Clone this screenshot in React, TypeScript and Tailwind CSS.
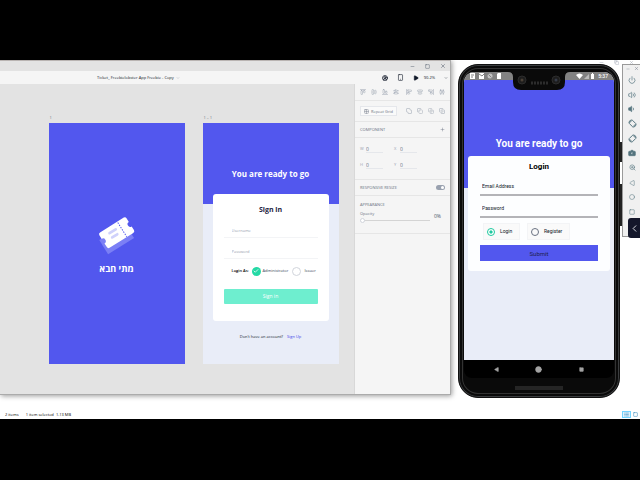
import type { ReactNode } from "react"
import {
  AlignCenterHorizontal, AlignCenterVertical, AlignEndHorizontal, AlignEndVertical,
  AlignHorizontalDistributeCenter, AlignStartHorizontal, AlignStartVertical,
  AlignVerticalDistributeCenter, Camera, Check, ChevronDown, ChevronLeft, Circle, CircleUserRound,
  Copy, Grid2x2, List, Minus, Play, Plus, Power, Smartphone, Square, SquaresExclude,
  SquaresIntersect, SquaresSubtract, SquaresUnite, Triangle, Volume1, Volume2, X, ZoomIn,
} from "lucide-react"

const alignGroups = [
  [AlignStartHorizontal, AlignCenterHorizontal, AlignEndHorizontal, AlignVerticalDistributeCenter],
  [AlignStartVertical, AlignCenterVertical, AlignEndVertical, AlignHorizontalDistributeCenter],
]

const pathIcons = [SquaresUnite, SquaresSubtract, SquaresIntersect, SquaresExclude]

const RotateDevice = ({ flip }: { flip?: boolean }) => (
  <svg viewBox="0 0 24 24" className={`size-[9px] ${flip ? "-scale-x-100" : ""}`} fill="none" stroke="currentColor" strokeWidth="2.5">
    <rect x="5" y="6" width="14" height="12" rx="1" transform="rotate(45 12 12)" />
    <path d="M2 10a10 10 0 0 1 8-8M22 14a10 10 0 0 1-8 8" />
  </svg>
)

const emulatorTools = [
  { name: "Power", icon: <Power className="size-2" /> },
  { name: "Volume up", icon: <Volume2 className="size-2" /> },
  { name: "Volume down", icon: <Volume1 className="size-2 fill-current" /> },
  { name: "Rotate left", icon: <RotateDevice /> },
  { name: "Rotate right", icon: <RotateDevice flip /> },
  { name: "Screenshot", icon: <Camera className="size-2 fill-[#54747e] stroke-[#54747e] [&>circle]:fill-white" /> },
  { name: "Zoom", icon: <ZoomIn className="size-[7px]" /> },
  { name: "Back", icon: <Triangle className="size-[6px] -rotate-90" /> },
  { name: "Home", icon: <Circle className="size-[6px]" /> },
  { name: "Overview", icon: <Square className="size-[6px]" /> },
]

const Ticket = () => (
  <svg viewBox="0 0 120 120" className="size-10" aria-label="Ticket">
    <g transform="translate(59 72) rotate(-32)">
      <path d="M-46-25h92v50h-92z" fill="#7b7ff5" />
    </g>
    <g transform="translate(59 53) rotate(-32)">
      <path
        d="M-42-27H42q6 0 6 6v13a8 8 0 0 0 0 16v13q0 6-6 6H-42q-6 0-6-6V8a8 8 0 0 0 0-16v-13q0-6 6-6z"
        fill="#fff"
      />
      <path d="M19-24v50" stroke="#5257ee" strokeWidth="3" strokeDasharray="4 4" />
      <path d="M-19-10H3M-19 5H-1" stroke="#cfd1fb" strokeWidth="8" strokeLinecap="round" />
    </g>
  </svg>
)

const Artboard = ({ label, children }: { label: string; children: ReactNode }) => (
  <section className="w-[136px] shrink-0">
    <p className="h-2 pl-px text-[4px] leading-[6px] text-gray-500">{label}</p>
    {children}
  </section>
)

const SplashBoard = () => (
  <Artboard label="1">
    <div className="flex h-[241px] flex-col items-center bg-[#5257ee] pt-[92px]">
      <Ticket />
      <p lang="he" dir="rtl" className="mt-2 text-[9px] leading-3 font-bold text-white">מתי חבא</p>
    </div>
  </Artboard>
)

const SignInBoard = () => (
  <Artboard label="1 – 1">
    <div className="h-[241px] bg-[#e9edf8]">
      <div className="h-[81px] bg-[#5257ee] pt-[45px]">
        <h1 className="text-center text-[8px] leading-3 font-bold text-white">You are ready to go</h1>
      </div>
      <form className="mx-auto -mt-[10px] h-[127px] w-[116px] rounded-[3px] bg-white px-[11px] pt-[10px]">
        <h2 className="text-center text-[7px] leading-3 font-bold text-[#23233f]">Sign in</h2>
        <input aria-label="Username" placeholder="Username" className="mt-2 block h-[14px] w-full border-b border-gray-100 pl-2 text-[4px] outline-none placeholder:text-gray-400" />
        <input aria-label="Password" type="password" placeholder="Password" className="mt-[7px] block h-[14px] w-full border-b border-gray-100 pl-2 text-[4px] outline-none placeholder:text-gray-400" />
        <div className="mt-[7px] flex h-[10px] items-center pl-2 text-[4px] whitespace-nowrap text-gray-700">
          <span className="w-5 font-semibold text-black">Login As:</span>
          <label className="flex w-10 items-center gap-[2px]">
            <span className="grid shrink-0 place-items-center">
              <input type="radio" name="role" defaultChecked className="col-start-1 row-start-1 size-[9px] appearance-none rounded-full bg-[#25d9a5]" />
              <Check className="col-start-1 row-start-1 size-[6px] text-white" strokeWidth={3} />
            </span>
            Administrator
          </label>
          <label className="flex items-center gap-1">
            <input type="radio" name="role" className="size-[9px] appearance-none rounded-full border border-gray-300" />
            Issuer
          </label>
        </div>
        <button type="button" className="mt-[13px] block h-[15px] w-full rounded-[1px] bg-[#6eeecf] text-[5px] text-white">Sign in</button>
      </form>
      <p className="mt-3 flex justify-center gap-1 text-[4px] leading-2 text-gray-900">
        Don't have an account? <a href="#signup" className="text-[#3a40e8]">Sign Up</a>
      </p>
    </div>
  </Artboard>
)

const SizeField = ({ label }: { label: string }) => (
  <label className="flex h-[6px] items-center text-[4px] text-gray-400">
    <span className="w-[6px]">{label}</span>
    <input defaultValue="0" className="w-[17px] border-b border-gray-200 text-[5px] leading-[5px] text-gray-500 outline-none" />
  </label>
)

const Inspector = () => (
  <aside className="w-[96px] shrink-0 divide-y divide-[#e6e6e6] border-l border-[#d8d8d8] bg-[#f5f5f5] text-[4px] text-gray-500">
    <div className="flex h-[17px] items-center justify-between px-[5px] text-gray-400">
      {alignGroups.map((group, g) => (
        <div key={g} className="flex gap-[5px]">
          {group.map((Icon, i) => (
            <button key={i} aria-label={`Align ${g * 4 + i + 1}`}><Icon className="size-[6px]" /></button>
          ))}
        </div>
      ))}
    </div>
    <div className="flex h-[21px] items-center px-[5px] text-gray-400">
      <button className="mr-auto flex h-[10px] w-[37px] items-center justify-center gap-[2px] border border-gray-200 bg-[#fafafa] text-[4px] leading-[5px] whitespace-nowrap text-gray-500">
        <Grid2x2 className="size-[5px]" /> Repeat Grid
      </button>
      <div className="flex gap-[5px]">
        {pathIcons.map((Icon, i) => (
          <button key={i} aria-label={`Path ${i + 1}`}><Icon className="size-[6px]" /></button>
        ))}
      </div>
    </div>
    <div className="flex h-4 items-center justify-between px-[5px]">
      <h3>COMPONENT</h3>
      <button aria-label="Add component"><Plus className="size-[5px]" /></button>
    </div>
    <div className="flex h-[42px] gap-[11px] px-[5px] pt-2">
      <div className="space-y-[10px]"><SizeField label="W" /><SizeField label="H" /></div>
      <div className="space-y-[10px]"><SizeField label="X" /><SizeField label="Y" /></div>
    </div>
    <label className="flex h-4 items-center justify-between px-[5px]">
      RESPONSIVE RESIZE
      <span className="flex h-[5px] w-[9px] rounded-full bg-gray-400 p-px">
        <input type="checkbox" defaultChecked className="ml-auto size-[3px] appearance-none rounded-full bg-white" />
      </span>
    </label>
    <div className="h-[38px] px-[5px] pt-[6px]">
      <h3 className="leading-[5px]">APPEARANCE</h3>
      <div className="mt-1 flex items-center gap-1">
        <label className="w-[70px] leading-[6px]">
          Opacity
          <input
            type="range"
            defaultValue="0"
            className="block h-[6px] w-full appearance-none bg-[linear-gradient(#d4d4d4,#d4d4d4)] bg-[length:100%_1px] bg-center bg-no-repeat [&::-webkit-slider-thumb]:size-[5px] [&::-webkit-slider-thumb]:appearance-none [&::-webkit-slider-thumb]:rounded-full [&::-webkit-slider-thumb]:border [&::-webkit-slider-thumb]:border-gray-300 [&::-webkit-slider-thumb]:bg-white"
          />
        </label>
        <span className="text-[5px] text-gray-600">0%</span>
      </div>
    </div>
    <div />
  </aside>
)

const DesignWindow = () => (
  <div className="relative z-10 flex h-[335px] min-w-0 flex-1 flex-col border-r border-b border-[#ababab] bg-[#f5f5f5] shadow-[1px_1px_5px_rgba(0,0,0,0.4)]">
    <header className="flex h-[11px] items-center justify-end gap-[10px] border-t border-[#b9b4b2] bg-[#e3e3e3] pr-1 text-gray-600">
      <button aria-label="Minimize"><Minus className="size-[5px]" /></button>
      <button aria-label="Maximize"><Square className="size-[5px]" /></button>
      <button aria-label="Close"><X className="size-[6px]" /></button>
    </header>
    <div className="flex h-[13px] items-center text-gray-900">
      <p className="ml-[97px] flex items-center gap-[2px] text-[4px] whitespace-nowrap">
        Ticket_ Freebielobster App Freebie - Copy <ChevronDown className="size-1 text-gray-400" />
      </p>
      <div className="ml-auto flex items-center gap-[9px] pr-[2px] text-[4px]">
        <button aria-label="Share"><CircleUserRound className="size-[6px]" strokeWidth={3} /></button>
        <button aria-label="Device preview"><Smartphone className="size-[7px]" /></button>
        <button aria-label="Play"><Play className="size-[6px] fill-current" /></button>
        <button className="-ml-1 flex items-center gap-[9px]">90.2% <ChevronDown className="size-1" /></button>
      </div>
    </div>
    <div className="flex min-h-0 flex-1">
      <main className="flex flex-1 justify-center gap-[18px] bg-[#e3e3e3] pt-[31px] pl-[33px]">
        <SplashBoard />
        <SignInBoard />
      </main>
      <Inspector />
    </div>
  </div>
)

const LoginForm = () => (
  <form className="mx-1 mt-[7px] h-[115px] rounded-[3px] bg-[#fdfeff] px-3 pt-[5px] text-[5px] text-gray-900">
    <h2 className="text-center text-[8px] leading-3 font-bold text-black">Login</h2>
    <input aria-label="Email Address" placeholder="Email Address" className="mt-2 block h-[15px] w-full border-b-2 border-[#b4b4b8] px-[2px] pb-[3px] outline-none placeholder:text-gray-900" />
    <input aria-label="Password" type="password" placeholder="Password" className="mt-[7px] block h-[15px] w-full border-b-2 border-[#b4b4b8] px-[2px] pb-[3px] outline-none placeholder:text-gray-900" />
    <div className="mt-[5px] flex gap-[7px] pl-[3px]">
      <label className="flex h-[17px] w-[37px] items-center gap-[5px] border border-gray-100 bg-[#fafafa] pl-[3px]">
        <input type="radio" name="mode" defaultChecked className="size-2 appearance-none rounded-full border border-[#1fc9a0] bg-[radial-gradient(#1fc9a0_30%,#fff_45%)]" />
        Login
      </label>
      <label className="flex h-[17px] w-[43px] items-center gap-[5px] border border-gray-100 bg-[#fafafa] pl-[3px]">
        <input type="radio" name="mode" className="size-2 appearance-none rounded-full border border-gray-500" />
        Register
      </label>
    </div>
    <button type="button" className="mt-[5px] block h-4 w-full bg-[#5257ee] text-[6px] text-[#20204c]">Submit</button>
  </form>
)

const StatusBar = () => (
  <div className="flex h-2 items-center justify-between bg-[#828282] px-[6px] text-white">
    <svg viewBox="0 0 32 6" className="h-[6px] w-8" fill="#fff">
      <path d="M0 0h5v6H0zM9 0h5v6H9zM27 1l1-1h3v6h-4z" />
      <path d="M1 2h3M2 3v2M9 1l3 2 2-2" stroke="#828282" fill="none" />
      <circle cx="20" cy="3" r="2.5" fill="#c4c4c4" />
      <path d="M18.500 1.500l3 3" stroke="#828282" />
    </svg>
    <div className="flex items-center gap-[2px] text-[5px] leading-2 font-medium">
      <svg viewBox="0 0 20 6" className="h-[6px] w-5" fill="#fff">
        <path d="M0 2q3.500-3 7 0L3.500 6zM15 1h1V0h1v1h1v5h-3z" />
        <path d="M8 6l5-5v5z" fill="#bbb" />
      </svg>
      5:37
    </div>
  </div>
)

const Phone = () => (
  <div className="relative mt-1 ml-[7px] h-[334px] w-[162px] shrink-0 rounded-[20px] border border-[#111] bg-[#0a0a0a] px-[5px] pt-[7px] font-[Roboto,sans-serif] shadow-[inset_0_0_0_1px_#3b3d3f,inset_0_0_0_3px_#0a0a0a,inset_0_0_0_4px_#333]">
    <div className="h-[288px] overflow-hidden rounded-t-[10px] bg-[#e9edf8]">
      <StatusBar />
      <div className="-mb-[39px] h-[108px] bg-[#5257ee] pt-[58px]">
        <h1 className="text-center text-[10px] leading-3 font-bold text-white">You are ready to go</h1>
      </div>
      <LoginForm />
    </div>
    <div className="flex h-[18px] items-center justify-around rounded-b-lg bg-black px-3 text-[#a3a3a3]">
      <button aria-label="Back"><Triangle className="size-[5px] -rotate-90 fill-current" /></button>
      <button aria-label="Home"><Circle className="size-[7px] fill-current" /></button>
      <button aria-label="Overview"><Square className="size-[5px] fill-current" /></button>
    </div>
    <div className="mx-auto mt-[8px] h-1 w-12 bg-[#252525]" />
    {/* camera notch and side keys sit over the frame */}
    <svg viewBox="0 0 62 18" className="absolute top-[7px] left-[49px] h-[18px] w-[62px]">
      <path d="M0 0h62q-5 0-5 5v5q0 8-8 8H13q-8 0-8-8V5q0-5-5-5z" fill="#0a0a0a" />
      <circle cx="14" cy="8" r="4" fill="#1d1d1d" stroke="#2c2c2c" />
      <circle cx="48" cy="8" r="4" fill="#1d1d1d" stroke="#2c2c2c" />
      <circle cx="14" cy="8" r="1.500" fill="#4a4036" />
      <circle cx="48" cy="8" r="1.500" fill="#353b48" />
      <path d="M23 11h17" stroke="#2c2c2c" strokeWidth="3" strokeDasharray="2 1" />
    </svg>
    <span className="absolute top-[77px] -right-[3px] h-5 w-[2px] bg-[#222]" />
    <span className="absolute top-[119px] -right-[3px] h-[42px] w-[2px] bg-[#222]" />
  </div>
)

const EmulatorBar = () => (
  <div className="relative mt-1 ml-[2px] h-[173px] w-[18px] shrink-0 border border-r-0 border-[#9a9a9a] bg-[#f0f0f0] text-[#54747e]">
    <div className="flex h-[7px] items-center justify-end gap-1 pr-px text-gray-500">
      <Minus className="size-[4px]" /><X className="size-[5px]" />
    </div>
    <div className="flex flex-col items-center pl-px">
      {emulatorTools.map((tool, i) => (
        <button key={tool.name} aria-label={tool.name} className={`flex items-center ${i % 3 === 2 ? "h-[14px]" : "h-[15px]"}`}>
          {tool.icon}
        </button>
      ))}
    </div>
    <button aria-label="Expand" className="absolute right-0 bottom-[-2px] flex h-5 w-3 items-center justify-center rounded-l-[3px] bg-[#14172b] text-gray-200">
      <ChevronLeft className="size-[11px]" />
    </button>
  </div>
)

export default function App() {
  return (
    <div className="min-h-screen bg-black py-[60px] font-['Open_Sans','Noto_Sans',sans-serif]">
      <div className="relative bg-white">
        <div className="absolute top-0 right-[6px] flex gap-[10px] text-gray-400">
          <Minus className="size-[5px]" /><Copy className="size-[5px]" /><X className="size-[5px]" />
        </div>
        <div className="flex h-[350px] items-start">
          <DesignWindow />
          <Phone />
          <EmulatorBar />
        </div>
        <footer className="flex h-[9px] items-center gap-[7px] pl-[5px] text-[4px] text-black">
          <span>2 items</span>
          <span>1 item selected&nbsp; 1.13 MB</span>
          <div className="ml-auto flex items-center gap-[2px] pr-[2px] text-sky-700">
            <button aria-label="Details view" className="border border-sky-300 bg-sky-100 px-px"><List className="size-[5px]" /></button>
            <button aria-label="Icon view"><Square className="size-[5px]" /></button>
          </div>
        </footer>
      </div>
    </div>
  )
}
